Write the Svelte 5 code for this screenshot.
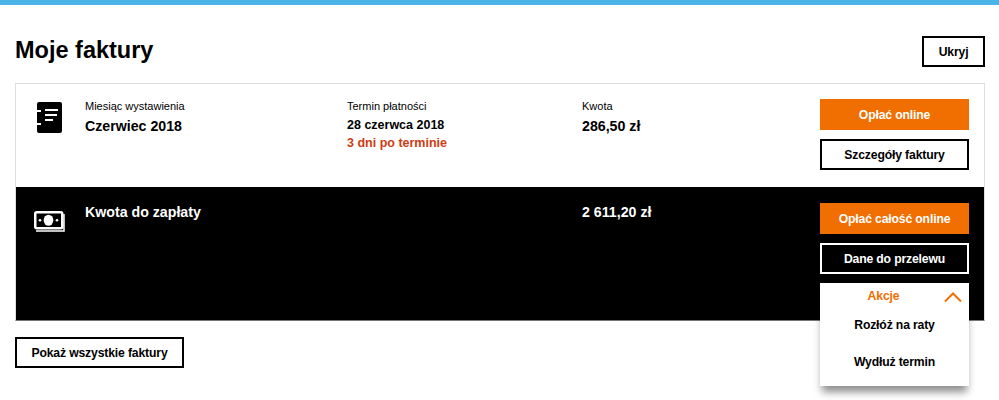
<script>
	// faktura z listy
	const invoice = {
		month: 'Czerwiec 2018',
		due: '28 czerwca 2018',
		late: '3 dni po terminie',
		amount: '286,50 zł'
	};
	const total = '2 611,20 zł';
	const actions = ['Rozłóż na raty', 'Wydłuż termin'];
</script>

<div class="topbar"></div>

<main class="page">
	<header class="head">
		<h1>Moje faktury</h1>
		<button class="btn hide">Ukryj</button>
	</header>

	<section class="list">
		<div class="row">
			<div class="icon">
				<svg width="25" height="31" viewBox="0 0 25 31">
					<path fill="#000" d="M2 0h21a2 2 0 0 1 2 2v27a2 2 0 0 1-2 2H2a2 2 0 0 1-2-2V23h4v-2H0V10h4V8H0V2a2 2 0 0 1 2-2z" />
					<path fill="#fff" d="M8 7h13v2H8zM8 12h12v2H8zM8 17h8v2H8z" />
				</svg>
			</div>
			<div class="col first">
				<span class="label">Miesiąc wystawienia</span>
				<strong class="big">{invoice.month}</strong>
			</div>
			<div class="col second">
				<span class="label">Termin płatności</span>
				<strong class="date">{invoice.due}</strong>
				<strong class="late">{invoice.late}</strong>
			</div>
			<div class="col third">
				<span class="label">Kwota</span>
				<strong class="big">{invoice.amount}</strong>
			</div>
			<div class="buttons">
				<button class="btn pay">Opłać online</button>
				<button class="btn">Szczegóły faktury</button>
			</div>
		</div>

		<div class="row dark">
			<div class="icon">
				<svg width="31" height="21" viewBox="0 0 31 21">
					<path fill="none" stroke="#fff" stroke-width="1.500" d="M2 20h28V3" />
					<rect x="1.250" y="1.250" width="27" height="16" rx="1.500" fill="#000" stroke="#fff" stroke-width="2.500" />
					<ellipse cx="14.500" cy="9.250" rx="4.800" ry="5.500" fill="#fff" />
					<circle cx="6" cy="9.250" r="1.300" fill="#fff" />
					<circle cx="23" cy="9.250" r="1.300" fill="#fff" />
				</svg>
			</div>
			<div class="col total-label">
				<strong class="big">Kwota do zapłaty</strong>
			</div>
			<div class="col third">
				<strong class="big">{total}</strong>
			</div>
			<div class="buttons">
				<button class="btn pay">Opłać całość online</button>
				<button class="btn outline">Dane do przelewu</button>
				<div class="slot">
					<div class="menu">
						<div class="menu-head">
							<span>Akcje</span>
							<svg width="18" height="10" viewBox="0 0 18 10">
								<path fill="none" stroke="#f16e00" stroke-width="2" d="M1 9.500 9 1.500l8 8" />
							</svg>
						</div>
						{#each actions as action}
							<div class="menu-item">{action}</div>
						{/each}
					</div>
				</div>
			</div>
		</div>
	</section>

	<button class="btn all">Pokaż wszystkie faktury</button>
</main>

<style>
	:global(body) {
		margin: 0;
		background: #fff;
		font-family: 'Liberation Sans', Arial, sans-serif;
		color: #000;
	}

	.topbar {
		height: 5px;
		background: #4bb4e6;
	}

	.page {
		box-sizing: border-box;
		min-height: 395px;
		padding: 31px 14px 0 15px;
	}

	.head {
		display: flex;
		justify-content: space-between;
		align-items: flex-start;
		margin-bottom: 16px;
	}

	h1 {
		margin: 0;
		font-size: 23.500px;
		line-height: 28px;
		font-weight: bold;
	}

	.btn {
		display: block;
		box-sizing: border-box;
		width: 149px;
		height: 31px;
		padding: 0;
		border: 2px solid #000;
		background: #fff;
		color: #000;
		font-family: inherit;
		font-size: 12.200px;
		letter-spacing: -0.15px;
		font-weight: bold;
		cursor: pointer;
	}

	.hide {
		width: 63px;
	}

	.pay {
		border: none;
		background: #f16e00;
		color: #fff;
	}

	.outline {
		border-color: #fff;
		background: #000;
		color: #fff;
	}

	.list {
		border: 1px solid #ddd;
		border-bottom-color: #777;
	}

	.row {
		display: flex;
		height: 88px;
		padding-top: 15px;
	}

	.dark {
		height: 117px;
		padding-top: 16px;
		background: #000;
		color: #fff;
	}

	.icon {
		width: 69px;
		padding: 3px 0 0 21px;
		box-sizing: border-box;
		flex: none;
	}

	.dark .icon {
		padding: 8px 0 0 18px;
	}

	.col {
		display: flex;
		flex-direction: column;
		flex: none;
	}

	.first {
		width: 262px;
	}

	.second {
		width: 235px;
	}

	.third {
		width: 238px;
	}

	.total-label {
		width: 497px;
	}

	.label {
		font-size: 11px;
		line-height: 14px;
		margin-bottom: 4px;
	}

	.big {
		font-size: 14.200px;
		line-height: 18px;
	}

	.date {
		font-size: 12.500px;
		line-height: 16px;
	}

	.late {
		font-size: 12.500px;
		line-height: 16px;
		margin-top: 2px;
		color: #cd3c14;
	}

	.buttons {
		display: flex;
		flex-direction: column;
		gap: 9px;
		width: 149px;
		flex: none;
	}

	.slot {
		position: relative;
		height: 37px;
	}

	.menu {
		position: absolute;
		top: 0;
		left: 0;
		width: 149px;
		height: 103px;
		background: #fff;
		box-shadow: 0 8px 8px -2px rgba(0, 0, 0, 0.45);
	}

	.menu-head {
		position: relative;
		height: 27px;
		line-height: 27px;
		padding-right: 22px;
		text-align: center;
		font-size: 12.200px;
		letter-spacing: -0.15px;
		font-weight: bold;
		color: #f16e00;
	}

	.menu-head svg {
		position: absolute;
		right: 7px;
		top: 9px;
	}

	.menu-item {
		height: 37px;
		line-height: 30px;
		text-align: center;
		font-size: 12.200px;
		letter-spacing: -0.15px;
		font-weight: bold;
		color: #000;
	}

	.all {
		width: 169px;
		margin-top: 16px;
	}
</style>
